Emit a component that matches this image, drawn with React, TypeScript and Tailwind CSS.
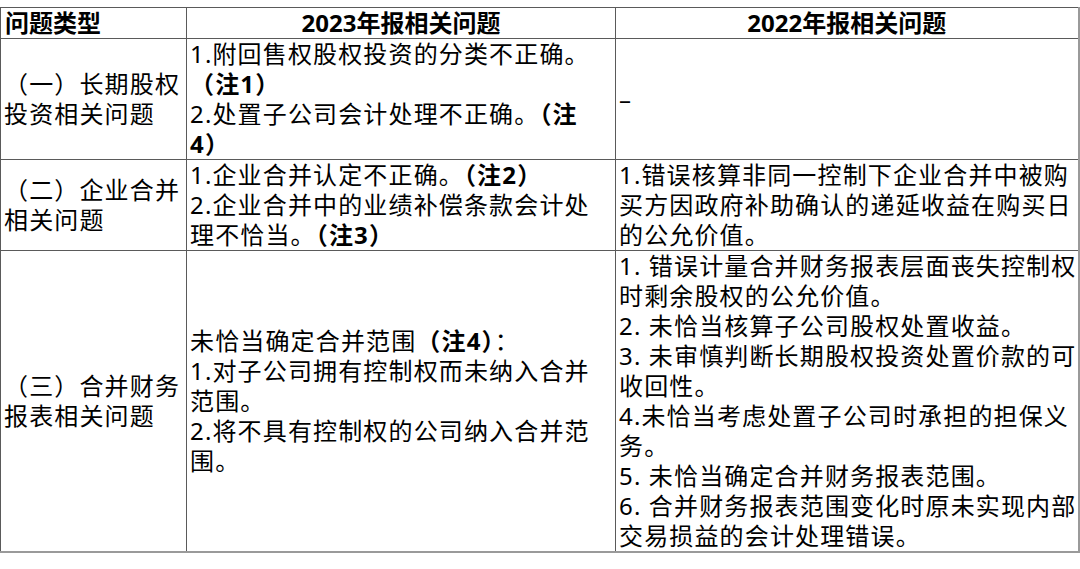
const font = { fontFamily: '"Noto Sans", "Noto Sans CJK SC", sans-serif' };

function Note({ n }: { n: string }) {
  return <span className="font-bold">（注{n}）</span>;
}

export default function App() {
  const cell = "border border-[#5a5a5a] align-middle px-[4px] py-0 whitespace-nowrap";
  const body = `${cell} tracking-[1.15px] pl-[3px]`;

  return (
    <div className="w-[1080px] h-[569px] bg-white pt-[7px] text-black" style={font}>
      <table className="w-[1078px] border-collapse table-fixed text-[24px] leading-[30px] border-r-2 border-b-2 border-[#9a9a9a]">
        <colgroup>
          <col className="w-[186px]" />
          <col className="w-[429px]" />
          <col className="w-[463px]" />
        </colgroup>
        <thead>
          <tr>
            <th className={`${cell} text-left font-bold pl-[4px]`}>问题类型</th>
            <th className={`${cell} text-center font-bold`}>2023年报相关问题</th>
            <th className={`${cell} text-center font-bold`}>2022年报相关问题</th>
          </tr>
        </thead>
        <tbody>
          {/* 长期股权投资 */}
          <tr>
            <td className={`${body} pl-[1px]`}>
              （一）长期股权
              <br />
              投资相关问题
            </td>
            <td className={body}>
              1.附回售权股权投资的分类不正确。
              <br />
              <Note n="1" />
              <br />
              2.处置子公司会计处理不正确。<span className="font-bold">（注</span>
              <br />
              <span className="font-bold">4）</span>
            </td>
            <td className={body}>–</td>
          </tr>

          {/* 企业合并 */}
          <tr>
            <td className={`${body} pl-[1px]`}>
              （二）企业合并
              <br />
              相关问题
            </td>
            <td className={body}>
              1.企业合并认定不正确。<Note n="2" />
              <br />
              2.企业合并中的业绩补偿条款会计处
              <br />
              理不恰当。<Note n="3" />
            </td>
            <td className={body}>
              1.错误核算非同一控制下企业合并中被购
              <br />
              买方因政府补助确认的递延收益在购买日
              <br />
              的公允价值。
            </td>
          </tr>

          {/* 合并财务报表 */}
          <tr>
            <td className={`${body} pl-[1px]`}>
              （三）合并财务
              <br />
              报表相关问题
            </td>
            <td className={body}>
              未恰当确定合并范围<Note n="4" />：
              <br />
              1.对子公司拥有控制权而未纳入合并
              <br />
              范围。
              <br />
              2.将不具有控制权的公司纳入合并范
              <br />
              围。
            </td>
            <td className={body}>
              1. 错误计量合并财务报表层面丧失控制权
              <br />
              时剩余股权的公允价值。
              <br />
              2. 未恰当核算子公司股权处置收益。
              <br />
              3. 未审慎判断长期股权投资处置价款的可
              <br />
              收回性。
              <br />
              4.未恰当考虑处置子公司时承担的担保义
              <br />
              务。
              <br />
              5. 未恰当确定合并财务报表范围。
              <br />
              6. 合并财务报表范围变化时原未实现内部
              <br />
              交易损益的会计处理错误。
            </td>
          </tr>
        </tbody>
      </table>
    </div>
  );
}
